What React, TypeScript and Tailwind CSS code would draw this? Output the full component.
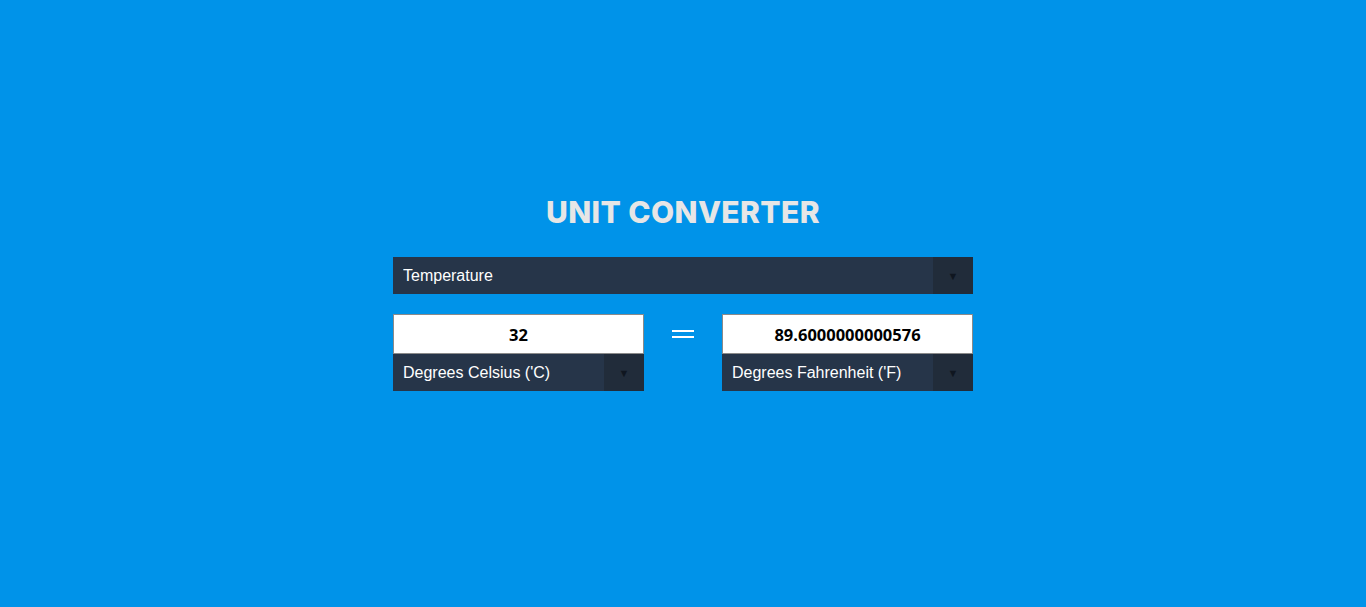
import { ChangeEvent, useState } from 'react'

type SelectBoxProps = {
  value: string
  options: string[]
  width: string
  onChange?: (v: string) => void
}

const SelectBox = ({ value, options, width, onChange }: SelectBoxProps) => {
  return (
    <div className={`relative flex h-[37px] ${width} bg-[#263549]`}>
      <select
        value={value}
        onChange={(e: ChangeEvent<HTMLSelectElement>) => onChange?.(e.target.value)}
        className="h-full w-full appearance-none bg-transparent pl-[10px] pr-12 text-[16px] text-white outline-none font-['Liberation_Sans',Arial,sans-serif]"
      >
        {options.map((o) => (
          <option key={o} value={o} className="text-black">
            {o}
          </option>
        ))}
      </select>
      <div className="pointer-events-none absolute right-0 top-0 flex h-full w-[40px] items-center justify-center bg-[#212c3a]">
        <span className="text-[11px] leading-none text-[#0f1620]">▼</span>
      </div>
    </div>
  )
}

const UnitBox = ({ value, unit, options }: { value: string; unit: string; options: string[] }) => {
  const [u, setU] = useState(unit)
  return (
    <div className="flex w-[251px] flex-col">
      <input
        defaultValue={value}
        className="h-[40px] w-full border border-[#8a8a8a] bg-white text-center text-[16.5px] font-bold text-black outline-none font-['Open_Sans',sans-serif]"
      />
      <SelectBox value={u} options={options} width="w-full" onChange={setU} />
    </div>
  )
}

const tempUnits = ["Degrees Celsius ('C)", "Degrees Fahrenheit ('F)", 'Kelvin (K)']

export default function App() {
  const [kind, setKind] = useState('Temperature')
  return (
    <main className="flex min-h-[607px] w-full flex-col items-center bg-[#0093e9] pt-[193px]">
      <h1 className="text-[30px] font-extrabold leading-[38px] tracking-[0.4px] text-[#e6e6e6] font-['Inter',sans-serif]">
        UNIT CONVERTER
      </h1>
      <div className="mt-[26px]">
        <SelectBox
          value={kind}
          options={['Temperature', 'Length', 'Mass', 'Speed']}
          width="w-[580px]"
          onChange={setKind}
        />
      </div>
      <div className="mt-[20px] flex w-[580px] items-start justify-between">
        <UnitBox value="32" unit={tempUnits[0]} options={tempUnits} />
        <div className="flex h-[40px] w-[78px] items-center justify-center">
          <div className="flex flex-col gap-[4px]">
            <span className="block h-[2px] w-[22px] bg-white" />
            <span className="block h-[2px] w-[22px] bg-white" />
          </div>
        </div>
        <UnitBox value="89.6000000000576" unit={tempUnits[1]} options={tempUnits} />
      </div>
    </main>
  )
}
